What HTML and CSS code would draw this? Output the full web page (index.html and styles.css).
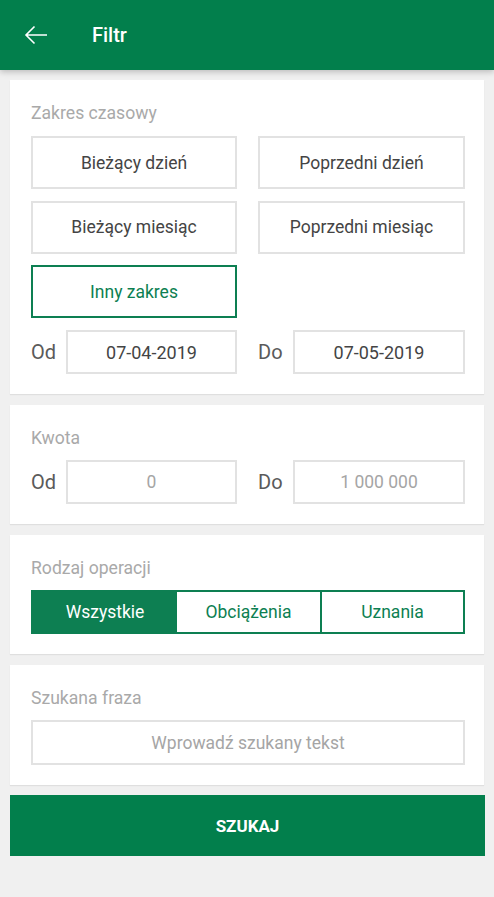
FILE: index.html
```html
<!DOCTYPE html>
<html lang="pl">
<head>
<meta charset="utf-8">
<title>Filtr</title>
<link rel="stylesheet" href="styles.css">
</head>
<body>
<header class="appbar">
  <svg class="back" width="24" height="20" viewBox="0 0 24 20"><path d="M23 10H2M10.5 1.5L2 10l8.5 8.5" fill="none" stroke="#fff" stroke-width="1.6"/></svg>
  <span class="title">Filtr</span>
</header>
<main class="content">
  <section class="card card-range">
    <div class="label">Zakres czasowy</div>
    <div class="grid">
      <button class="opt">Bieżący dzień</button>
      <button class="opt">Poprzedni dzień</button>
      <button class="opt">Bieżący miesiąc</button>
      <button class="opt">Poprzedni miesiąc</button>
      <button class="opt active">Inny zakres</button>
      <span></span>
    </div>
    <div class="pair">
      <div class="field"><span class="flabel">Od</span><div class="input">07-04-2019</div></div>
      <div class="field"><span class="flabel">Do</span><div class="input">07-05-2019</div></div>
    </div>
  </section>
  <section class="card">
    <div class="label">Kwota</div>
    <div class="pair">
      <div class="field"><span class="flabel">Od</span><div class="input ph">0</div></div>
      <div class="field"><span class="flabel">Do</span><div class="input ph">1 000 000</div></div>
    </div>
  </section>
  <section class="card">
    <div class="label">Rodzaj operacji</div>
    <div class="seg">
      <div class="segitem on">Wszystkie</div>
      <div class="segitem">Obciążenia</div>
      <div class="segitem">Uznania</div>
    </div>
  </section>
  <section class="card">
    <div class="label">Szukana fraza</div>
    <div class="input search ph">Wprowadź szukany tekst</div>
  </section>
  <button class="submit">SZUKAJ</button>
</main>
</body>
</html>
```
FILE: styles.css
```css
* { box-sizing: border-box; }
html, body { margin: 0; padding: 0; }
body {
  background: #f0f0f0;
  font-family: Roboto, "Liberation Sans", sans-serif;
  width: 494px;
  height: 897px;
  overflow: hidden;
}
.appbar {
  height: 70px;
  background: #027f4c;
  display: flex;
  align-items: center;
  padding-left: 24px;
  box-shadow: 0 2px 6px rgba(0,0,0,0.22);
  position: relative;
  z-index: 1;
}
.back { display: block; }
.title {
  color: #fff;
  font-size: 20px;
  margin-left: 44px;
  font-weight: 500;
}
.content {
  padding: 10px 10px 0 10px;
  display: flex;
  flex-direction: column;
  gap: 11px;
}
.card {
  background: #fff;
  padding: 21px 19px 20px 21px;
  box-shadow: 0 1px 1px rgba(0,0,0,0.07);
}
.label {
  color: #a9a9a9;
  font-size: 17.6px;
  line-height: 24px;
  margin-bottom: 10px;
}
.card-range .label { margin-bottom: 11px; }
.grid {
  display: grid;
  grid-template-columns: 206px 207px;
  column-gap: 21px;
  row-gap: 11.5px;
  margin-bottom: 12px;
}
.opt {
  height: 53px;
  background: #fff;
  border: 2px solid #e2e2e2;
  font-family: inherit;
  font-size: 17.5px;
  color: #444;
  padding: 0;
}
.opt.active {
  border-color: #0d7f52;
  color: #0d7f52;
}
.pair {
  display: grid;
  grid-template-columns: 206px 207px;
  column-gap: 21px;
}
.field {
  display: flex;
  align-items: center;
}
.flabel {
  width: 35px;
  font-size: 20px;
  color: #5a5a5a;
}
.input {
  flex: 1;
  height: 44px;
  border: 2px solid #e2e2e2;
  display: flex;
  align-items: center;
  justify-content: center;
  font-size: 18px;
  color: #444;
}
.input.ph { color: #a5a5a5; font-size: 17.5px; }
.search { height: 45px; }
.seg {
  display: grid;
  grid-template-columns: 144px 1fr 1fr;
  height: 44px;
  border: 2px solid #0d7f52;
}
.segitem {
  display: flex;
  align-items: center;
  justify-content: center;
  font-size: 17.5px;
  color: #0d7f52;
  background: #fff;
}
.segitem + .segitem { border-left: 2px solid #0d7f52; }
.segitem.on { background: #0d7f52; color: #fff; }
.segitem.on + .segitem { border-left: 0; }
.submit {
  margin-top: -1px;
  height: 61px;
  border: 0;
  background: #027f4c;
  color: #fff;
  font-family: inherit;
  font-size: 17px;
  font-weight: 700;
  width: 475px;
}
```
